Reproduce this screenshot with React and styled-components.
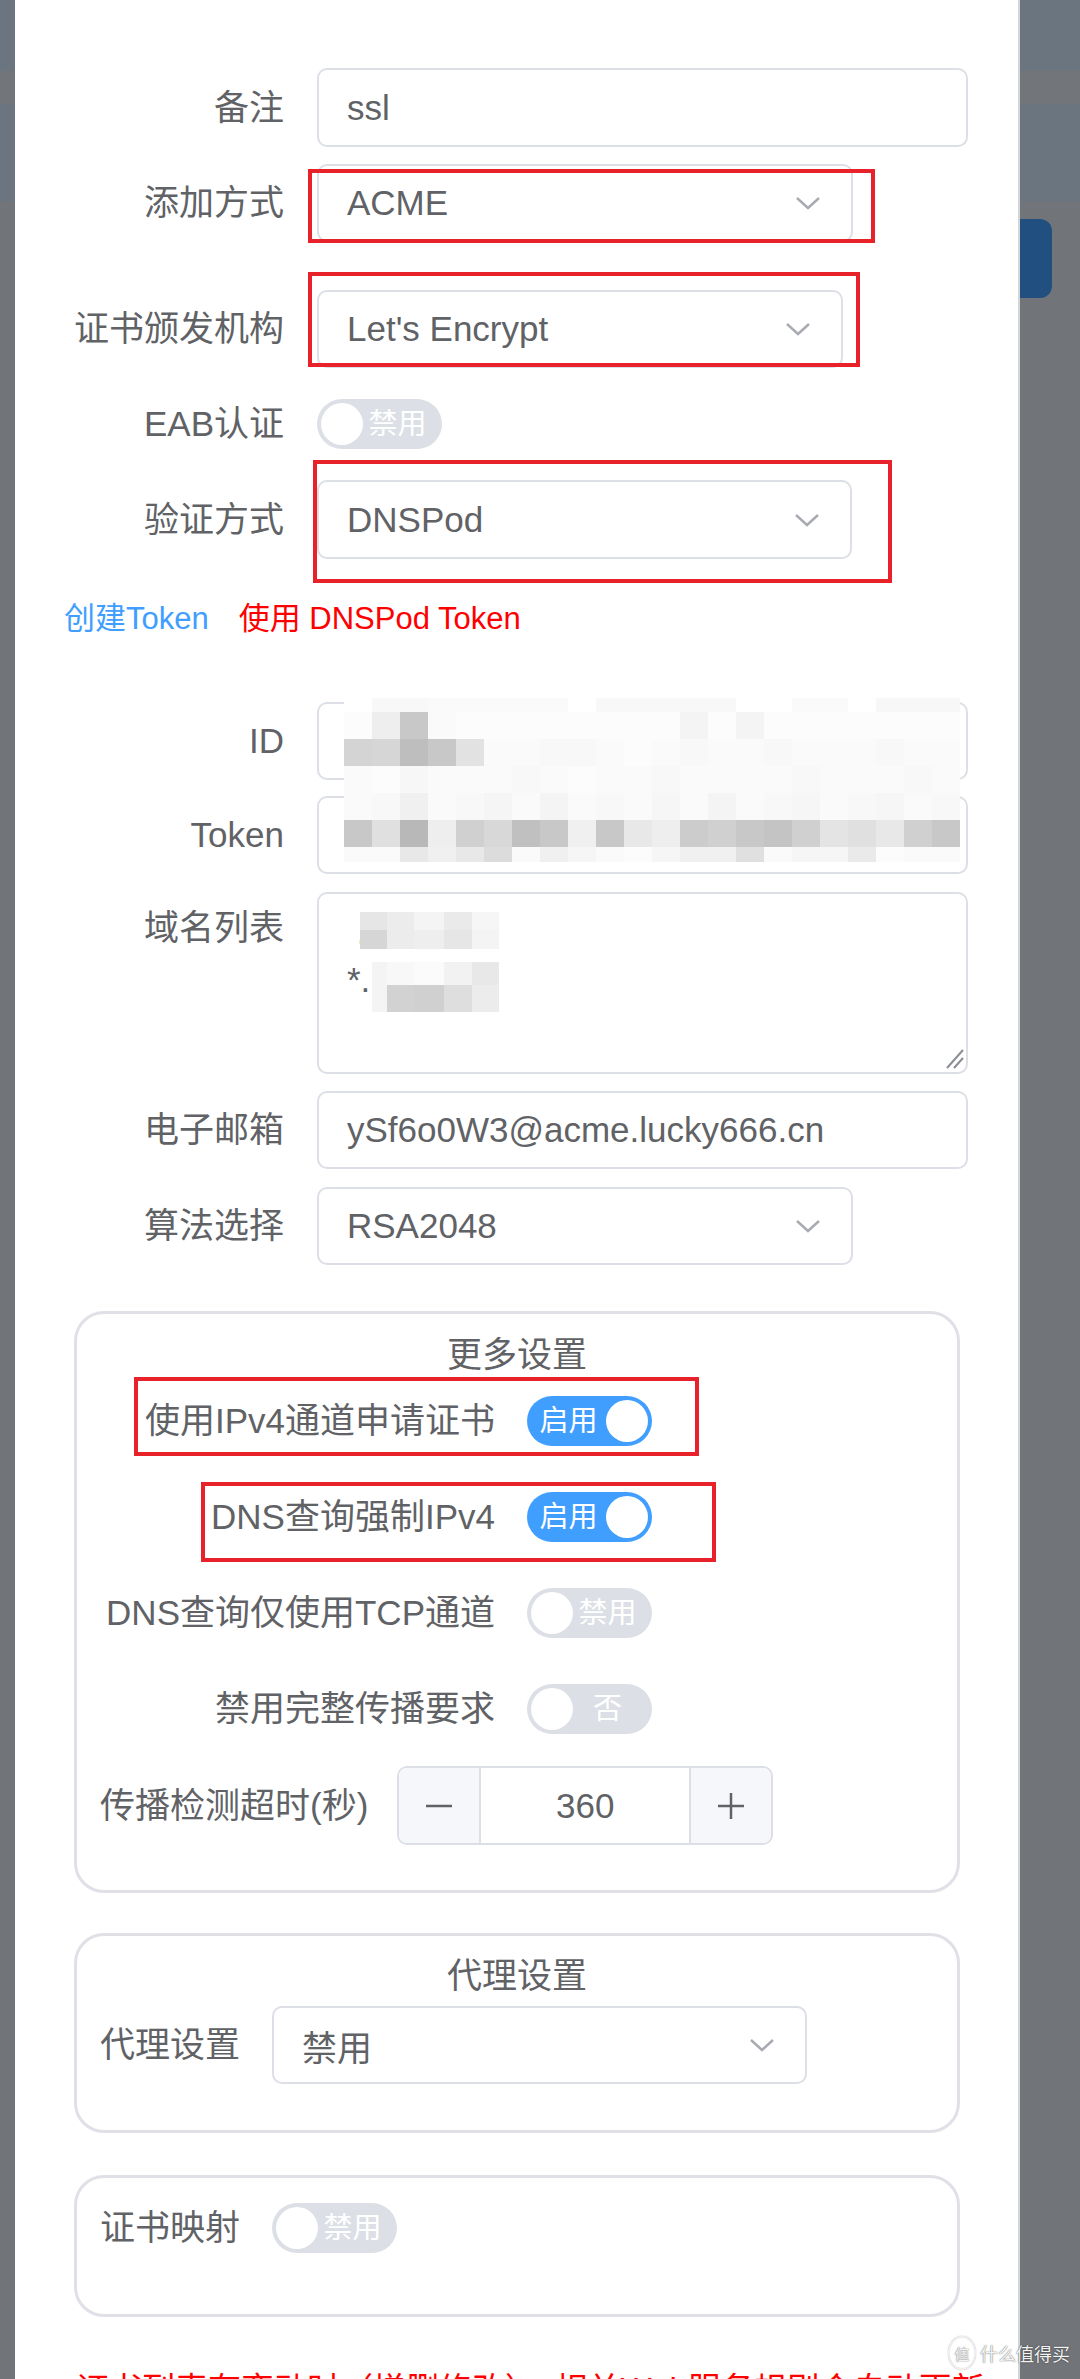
import styled, { createGlobalStyle } from "styled-components";

const GlobalStyle = createGlobalStyle`
  html, body {
    margin: 0;
    padding: 0;
  }
  body {
    background: #717479;
    font-family: "Liberation Sans", "Noto Sans CJK SC", sans-serif;
  }
`;

const backdrop = `linear-gradient(to bottom,
  #6b7580 0, #6b7580 71px,
  #727579 71px, #727579 104px,
  #6b7580 104px, #6b7580 202px,
  #717479 202px)`;

const Page = styled.div`
  position: relative;
  display: flex;
  height: 2379px;
  overflow: hidden;
`;

const SideStrip = styled.div`
  flex: 0 0 ${(p) => p.$w}px;
  background: ${backdrop};
`;

const BehindButton = styled.div`
  margin-top: 219px;
  width: 32px;
  height: 79px;
  background: #214f80;
  border-radius: 0 12px 12px 0;
`;

const Panel = styled.div`
  flex: 0 0 1005px;
  box-sizing: border-box;
  background: #fff;
  border-right: 2px solid #d3d5d8;
  padding-top: 68px;
  color: #606266;
`;

const Row = styled.div`
  position: relative;
  display: flex;
  align-items: ${(p) => (p.$top ? "flex-start" : "center")};
  min-height: 78px;
  margin-top: ${(p) => p.$mt ?? 17}px;
`;

const Label = styled.div`
  flex: ${(p) => (p.$w ? `0 0 ${p.$w}px` : "none")};
  box-sizing: border-box;
  padding: ${(p) => p.$pt ?? 0}px ${(p) => p.$pr ?? 33}px 0 ${(p) => p.$pl ?? 0}px;
  text-align: right;
  font-size: 35px;
  line-height: 46px;
  color: #606266;
  white-space: nowrap;
`;

const Field = styled.div`
  position: relative;
  box-sizing: border-box;
  flex: none;
  width: ${(p) => p.$w}px;
  height: ${(p) => p.$h ?? 78}px;
  border: 2px solid #dcdfe6;
  border-radius: 10px;
  background: #fff;
  display: flex;
  align-items: ${(p) => (p.$top ? "flex-start" : "center")};
  padding: ${(p) => (p.$top ? "14px" : "0")} 30px 0 28px;
  font-size: 35px;
  color: #606266;
  white-space: nowrap;
`;

const FieldText = styled.span`
  flex: 1;
`;

const AreaLines = styled.div`
  font-size: 35px;
  line-height: 48px;
  color: #606266;
`;

const Annotation = styled.div`
  position: absolute;
  z-index: 3;
  box-sizing: border-box;
  left: ${(p) => p.$x}px;
  top: ${(p) => p.$y}px;
  width: ${(p) => p.$w}px;
  height: ${(p) => p.$h}px;
  border: 4px solid #e8222a;
  pointer-events: none;
`;

const Overlay = styled.svg`
  position: absolute;
  z-index: 2;
  left: ${(p) => p.$x}px;
  top: ${(p) => p.$y}px;
`;

const Track = styled.div`
  box-sizing: border-box;
  flex: none;
  width: 125px;
  height: 50px;
  border-radius: 25px;
  padding: 4px;
  display: flex;
  align-items: center;
  flex-direction: ${(p) => (p.$on ? "row-reverse" : "row")};
  background: ${(p) => (p.$on ? "#409eff" : "#dcdfe6")};
`;

const Knob = styled.div`
  flex: none;
  width: 42px;
  height: 42px;
  border-radius: 50%;
  background: #fff;
`;

const TrackText = styled.span`
  flex: 1;
  text-align: center;
  padding-right: ${(p) => (p.$on ? 0 : 6)}px;
  color: #fff;
  font-size: 29px;
  line-height: 1;
`;

const LinkRow = styled.div`
  display: flex;
  gap: 30px;
  margin-top: 33px;
  padding-left: 49px;
  height: 46px;
  align-items: center;
  font-size: 31px;
`;

const LinkText = styled.span`
  color: ${(p) => p.$color};
`;

const Group = styled.div`
  margin: ${(p) => p.$mt}px 58px 0 59px;
  border: 3px solid #dfe1e7;
  border-radius: 30px;
  padding: ${(p) => p.$pt}px 0 ${(p) => p.$pb}px;
`;

const GroupTitle = styled.div`
  text-align: center;
  font-size: 35px;
  line-height: 47px;
  color: #606266;
`;

const Stepper = styled.div`
  flex: none;
  display: flex;
  box-sizing: border-box;
  width: 376px;
  height: 79px;
  border: 2px solid #dcdfe6;
  border-radius: 10px;
  overflow: hidden;
`;

const StepButton = styled.div`
  flex: 0 0 80px;
  display: flex;
  align-items: center;
  justify-content: center;
  background: #f5f7fa;
  border-${(p) => p.$side}: 2px solid #dcdfe6;
`;

const StepValue = styled.div`
  flex: 1;
  display: flex;
  align-items: center;
  justify-content: center;
  font-size: 35px;
  color: #606266;
`;

const Notice = styled.div`
  margin-top: 48px;
  padding: 0 30px 0 61px;
  font-size: 33px;
  line-height: 50px;
  color: #ff0000;
`;

const Watermark = styled.div`
  position: absolute;
  z-index: 5;
  left: 948px;
  top: 2336px;
  display: flex;
  align-items: center;
  gap: 4px;
  color: #f4f4f4;
  text-shadow: 0 0 1px rgba(0, 0, 0, 0.55), 0 0 2px rgba(0, 0, 0, 0.3);
`;

const WatermarkLogo = styled.div`
  width: 24px;
  height: 30px;
  border: 2px solid #eeeeee;
  box-shadow: 0 0 1px rgba(0, 0, 0, 0.5);
  border-radius: 50%;
  display: flex;
  align-items: center;
  justify-content: center;
  font-size: 15px;
  font-family: "Noto Sans CJK SC", sans-serif;
`;

const WatermarkText = styled.span`
  font-size: 18px;
  font-family: "Noto Sans CJK SC", sans-serif;
`;

const Chevron = () => (
  <svg width="26" height="14" viewBox="0 0 26 14">
    <polyline points="2,2 13,12 24,2" fill="none" stroke="#a8abb2" strokeWidth="2.5" />
  </svg>
);

const Switch = ({ on, text }) => (
  <Track $on={on}>
    <Knob />
    <TrackText $on={on}>{text}</TrackText>
  </Track>
);

const gray = (v) => `rgb(${v},${v},${v})`;

// pixelated blur over the ID / Token values
const credRows = [
  { h: 14, v: [255, 248, 248, 250, 250, 250, 250, 250, 255, 248, 248, 248, 248, 248, 255, 255, 250, 250, 255, 247, 247, 247] },
  { h: 27, v: [252, 238, 200, 250, 252, 252, 252, 252, 252, 252, 252, 252, 244, 252, 244, 252, 252, 252, 252, 252, 252, 252] },
  { h: 27, v: [212, 214, 190, 200, 226, 250, 250, 248, 248, 250, 252, 250, 248, 250, 250, 248, 250, 250, 250, 248, 250, 250] },
  { h: 27, v: [250, 252, 247, 250, 250, 250, 248, 250, 252, 250, 250, 248, 250, 250, 250, 250, 248, 250, 250, 250, 248, 250] },
  { h: 27, v: [250, 248, 240, 250, 248, 245, 250, 244, 250, 248, 250, 246, 250, 244, 250, 248, 246, 250, 248, 246, 250, 248] },
  { h: 27, v: [200, 224, 184, 238, 208, 216, 192, 200, 240, 200, 232, 238, 204, 208, 200, 196, 208, 228, 224, 232, 208, 200] },
  { h: 15, v: [250, 250, 232, 240, 232, 220, 250, 240, 246, 250, 252, 246, 240, 240, 224, 250, 246, 246, 234, 252, 250, 250] },
];

const CredentialMosaic = () => {
  let y = 0;
  const cells = [];
  credRows.forEach((row, r) => {
    row.v.forEach((v, c) => {
      cells.push(<rect key={`${r}-${c}`} x={c * 28} y={y} width="28" height={row.h} fill={gray(v)} />);
    });
    y += row.h;
  });
  return (
    <Overlay $x={329} $y={-4} width="616" height="164" viewBox="0 0 616 164">
      {cells}
    </Overlay>
  );
};

const domainBlocks = [
  [3, 0, 27, 18, 230], [30, 0, 27, 18, 236], [57, 0, 30, 18, 244], [87, 0, 28, 18, 234], [115, 0, 27, 18, 246],
  [3, 18, 27, 19, 214], [30, 18, 27, 19, 236], [57, 18, 30, 19, 238], [87, 18, 28, 19, 230], [115, 18, 27, 19, 244],
  [15, 50, 15, 50, 244], [30, 50, 27, 23, 248], [57, 50, 30, 23, 251], [87, 50, 28, 23, 242], [115, 50, 27, 23, 232],
  [30, 73, 27, 27, 210], [57, 73, 30, 27, 208], [87, 73, 28, 27, 222], [115, 73, 27, 27, 236],
];

const DomainMosaic = () => (
  <Overlay $x={38} $y={18} width="145" height="100" viewBox="0 0 145 100">
    {domainBlocks.map(([x, y, w, h, v], i) => (
      <rect key={i} x={x} y={y} width={w} height={h} fill={gray(v)} />
    ))}
  </Overlay>
);

const ResizeGrip = () => (
  <Overlay $x={626} $y={152} width="20" height="24" viewBox="0 0 20 24">
    <line x1="2" y1="22" x2="18" y2="4" stroke="#8a8d92" strokeWidth="2" />
    <line x1="9" y1="22" x2="18" y2="12" stroke="#8a8d92" strokeWidth="2" />
  </Overlay>
);

const Minus = () => (
  <svg width="28" height="28" viewBox="0 0 28 28">
    <line x1="1" y1="14" x2="27" y2="14" stroke="#606266" strokeWidth="2.5" />
  </svg>
);

const Plus = () => (
  <svg width="28" height="28" viewBox="0 0 28 28">
    <line x1="1" y1="14" x2="27" y2="14" stroke="#606266" strokeWidth="2.5" />
    <line x1="14" y1="1" x2="14" y2="27" stroke="#606266" strokeWidth="2.5" />
  </svg>
);

const App = () => {
  return (
    <Page>
      <GlobalStyle />
      <SideStrip $w={15} />
      <Panel>
        <Row $mt={0}>
          <Label $w={302}>备注</Label>
          <Field $w={651} $h={79}>
            <FieldText>ssl</FieldText>
          </Field>
        </Row>

        <Row>
          <Label $w={302}>添加方式</Label>
          <Field $w={536}>
            <FieldText>ACME</FieldText>
            <Chevron />
          </Field>
          <Annotation $x={293} $y={5} $w={567} $h={74} />
        </Row>

        <Row $mt={48}>
          <Label $w={302}>证书颁发机构</Label>
          <Field $w={526}>
            <FieldText>Let's Encrypt</FieldText>
            <Chevron />
          </Field>
          <Annotation $x={293} $y={-18} $w={552} $h={95} />
        </Row>

        <Row>
          <Label $w={302}>EAB认证</Label>
          <Switch on={false} text="禁用" />
        </Row>

        <Row>
          <Label $w={302}>验证方式</Label>
          <Field $w={535} $h={79}>
            <FieldText>DNSPod</FieldText>
            <Chevron />
          </Field>
          <Annotation $x={298} $y={-20} $w={579} $h={123} />
        </Row>

        <LinkRow>
          <LinkText $color="#409eff">创建Token</LinkText>
          <LinkText $color="#ff0000">使用 DNSPod Token</LinkText>
        </LinkRow>

        <Row $mt={64}>
          <Label $w={302}>ID</Label>
          <Field $w={651} />
          <CredentialMosaic />
        </Row>

        <Row $mt={16}>
          <Label $w={302}>Token</Label>
          <Field $w={651} />
        </Row>

        <Row $mt={18} $top>
          <Label $w={302} $pt={13}>域名列表</Label>
          <Field $w={651} $h={182} $top>
            <AreaLines>
              <div>&nbsp;.</div>
              <div>*.</div>
            </AreaLines>
            <DomainMosaic />
            <ResizeGrip />
          </Field>
        </Row>

        <Row>
          <Label $w={302}>电子邮箱</Label>
          <Field $w={651}>
            <FieldText>ySf6o0W3@acme.lucky666.cn</FieldText>
          </Field>
        </Row>

        <Row $mt={18}>
          <Label $w={302}>算法选择</Label>
          <Field $w={536}>
            <FieldText>RSA2048</FieldText>
            <Chevron />
          </Field>
        </Row>

        <Group $mt={46} $pt={17} $pb={45}>
          <GroupTitle>更多设置</GroupTitle>
          <Row $mt={4}>
            <Label $w={450} $pr={32}>使用IPv4通道申请证书</Label>
            <Switch on text="启用" />
            <Annotation $x={57} $y={-5} $w={565} $h={79} />
          </Row>
          <Row $mt={18}>
            <Label $w={450} $pr={32}>DNS查询强制IPv4</Label>
            <Switch on text="启用" />
            <Annotation $x={124} $y={4} $w={515} $h={80} />
          </Row>
          <Row $mt={18}>
            <Label $w={450} $pr={32}>DNS查询仅使用TCP通道</Label>
            <Switch on={false} text="禁用" />
          </Row>
          <Row $mt={18}>
            <Label $w={450} $pr={32}>禁用完整传播要求</Label>
            <Switch on={false} text="否" />
          </Row>
          <Row $mt={18}>
            <Label $pl={23} $pr={29}>传播检测超时(秒)</Label>
            <Stepper>
              <StepButton $side="right">
                <Minus />
              </StepButton>
              <StepValue>360</StepValue>
              <StepButton $side="left">
                <Plus />
              </StepButton>
            </Stepper>
          </Row>
        </Group>

        <Group $mt={40} $pt={16} $pb={46}>
          <GroupTitle>代理设置</GroupTitle>
          <Row $mt={7}>
            <Label $pl={23} $pr={32}>代理设置</Label>
            <Field $w={535}>
              <FieldText>禁用</FieldText>
              <Chevron />
            </Field>
          </Row>
        </Group>

        <Group $mt={42} $pt={11} $pb={47}>
          <Row $mt={0}>
            <Label $pl={23} $pr={32}>证书映射</Label>
            <Switch on={false} text="禁用" />
          </Row>
        </Group>

        <Notice>证书列表有变动时（增删修改），相关Web服务规则会自动更新</Notice>
      </Panel>
      <SideStrip $w={60}>
        <BehindButton />
      </SideStrip>

      <Watermark>
        <WatermarkLogo>值</WatermarkLogo>
        <WatermarkText>什么值得买</WatermarkText>
      </Watermark>
    </Page>
  );
};

export default App;
